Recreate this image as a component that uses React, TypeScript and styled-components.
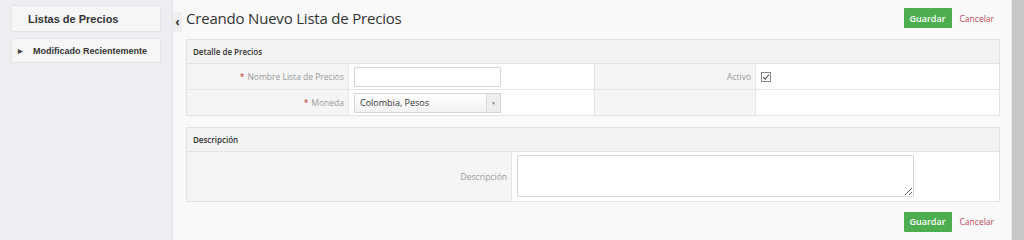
import React, { useState } from "react";
import styled, { createGlobalStyle } from "styled-components";

const GlobalStyle = createGlobalStyle`
  html, body {
    margin: 0;
    padding: 0;
    height: 240px;
    overflow: hidden;
    background: #f9f9f9;
  }
`;

const Page = styled.div`
  display: flex;
  width: 1024px;
  height: 240px;
  font-family: "Open Sans", "Liberation Sans", sans-serif;
`;

const Sidebar = styled.div`
  width: 173px;
  padding: 5px 11px 0 11px;
  box-sizing: border-box;
  background: #eceef1;
  display: flex;
  flex-direction: column;
  gap: 6px;
  border-right: 1px solid #e2e4e7;
`;

const SideCard = styled.div<{ $big?: boolean }>`
  width: 150px;
  height: ${(p) => (p.$big ? 27 : 25)}px;
  box-sizing: border-box;
  background: #f6f6f7;
  border: 1px solid #e3e4e6;
  border-radius: 2px;
  display: flex;
  align-items: center;
  padding-left: ${(p) => (p.$big ? 16 : 6)}px;
  font-family: "Liberation Sans", Arial, sans-serif;
  font-weight: bold;
  font-size: ${(p) => (p.$big ? 11 : 9)}px;
  color: #333;
  gap: 10px;
`;

const Caret = styled.span`
  font-size: 6px;
  color: #444;
`;

const Main = styled.div`
  flex: 1;
  display: flex;
  background: #f9f9f9;
`;

const Content = styled.div`
  flex: 1;
  display: flex;
  flex-direction: column;
  padding: 0 11px 0 0;
`;

const Collapse = styled.div`
  width: 9px;
  height: 20px;
  margin-top: 12px;
  background: #eeeff1;
  display: flex;
  align-items: center;
  justify-content: center;
  font-size: 12px;
  font-weight: bold;
  color: #333;
  line-height: 1;
`;

const TopBar = styled.div`
  display: flex;
  align-items: center;
  height: 40px;
  padding-left: 4px;
  padding-bottom: 3px;
`;

const Title = styled.h1`
  margin: 0;
  flex: 1;
  font-size: 15px;
  font-weight: normal;
  color: #333;
  letter-spacing: -0.2px;
`;

const Actions = styled.div`
  display: flex;
  align-items: center;
  gap: 8px;
  margin-right: 2px;
`;

const SaveButton = styled.button`
  width: 48px;
  height: 20px;
  border: none;
  border-radius: 1px;
  background: #4cae4f;
  color: #fff;
  font-family: "Open Sans", sans-serif;
  font-size: 9px;
  font-weight: 600;
  padding: 0;
`;

const CancelLink = styled.a`
  font-size: 8.5px;
  color: #b94a58;
  margin-right: 4px;
`;

const Panel = styled.div`
  margin-left: 4px;
  border: 1px solid #e3e3e3;
  background: #fff;
`;

const PanelHeader = styled.div`
  height: 23px;
  display: flex;
  align-items: center;
  padding-left: 6px;
  background: #f3f3f3;
  border-bottom: 1px solid #e3e3e3;
  font-size: 8px;
  font-weight: 600;
  color: #333;
`;

const Grid = styled.div<{ $cols: string }>`
  display: grid;
  grid-template-columns: ${(p) => p.$cols};
`;

const LabelCell = styled.div<{ $h: number; $last?: boolean }>`
  height: ${(p) => p.$h}px;
  box-sizing: border-box;
  background: #f5f5f6;
  border-right: 1px solid #e6e6e6;
  border-bottom: ${(p) => (p.$last ? "none" : "1px solid #e6e6e6")};
  display: flex;
  align-items: center;
  justify-content: flex-end;
  padding-right: 4px;
  font-size: 8.5px;
  color: #999;
`;

const FieldCell = styled.div<{ $h: number; $last?: boolean; $top?: boolean; $edge?: boolean }>`
  height: ${(p) => p.$h}px;
  box-sizing: border-box;
  background: #fff;
  border-right: ${(p) => (p.$edge ? "1px solid #e6e6e6" : "none")};
  border-bottom: ${(p) => (p.$last ? "none" : "1px solid #e6e6e6")};
  display: flex;
  align-items: ${(p) => (p.$top ? "flex-start" : "center")};
  padding: ${(p) => (p.$top ? "3px 5px" : "0 5px")};
`;

const Required = styled.span`
  color: #c0392b;
  margin-right: 3px;
`;

const TextInput = styled.input`
  width: 147px;
  height: 20px;
  box-sizing: border-box;
  border: 1px solid #d5d5d5;
  border-radius: 1px;
  padding: 0 4px;
  font-size: 9px;
  outline: none;
`;

const Select = styled.div`
  width: 147px;
  height: 20px;
  box-sizing: border-box;
  border: 1px solid #d5d5d5;
  display: flex;
  align-items: center;
  background: linear-gradient(#ffffff, #f2f2f2);
  font-size: 9px;
  color: #333;
`;

const SelectText = styled.span`
  flex: 1;
  padding-left: 5px;
`;

const SelectArrow = styled.span`
  width: 13px;
  height: 18px;
  border-left: 1px solid #ddd;
  background: #eeeeee;
  display: flex;
  align-items: center;
  justify-content: center;
  font-size: 5px;
  color: #888;
`;

const TextArea = styled.textarea`
  width: 397px;
  height: 42px;
  box-sizing: border-box;
  border: 1px solid #d5d5d5;
  border-radius: 1px;
  resize: both;
  outline: none;
`;

const Gap = styled.div`
  height: 12px;
`;

const BottomBar = styled.div`
  display: flex;
  justify-content: flex-end;
  align-items: center;
  height: 40px;
  padding-top: 2px;
`;

const Scrollbar = styled.div`
  width: 12px;
  background: #c8c8c8;
  border-left: 1px solid #e8e8e8;
`;

function CheckIcon() {
  return (
    <svg width="10" height="10" viewBox="0 0 10 10">
      <rect x="0.5" y="0.5" width="9" height="9" fill="#fff" stroke="#888" />
      <path d="M2.2 5.2 L4.2 7.2 L8 2.5" stroke="#555" strokeWidth="1.1" fill="none" />
    </svg>
  );
}

function App() {
  const [name, setName] = useState<string>("");
  const [description, setDescription] = useState<string>("");

  return (
    <>
      <GlobalStyle />
      <Page>
        <Sidebar>
          <SideCard $big>Listas de Precios</SideCard>
          <SideCard>
            <Caret>▶</Caret>
            Modificado Recientemente
          </SideCard>
        </Sidebar>
        <Main>
          <Collapse>‹</Collapse>
          <Content>
            <TopBar>
              <Title>Creando Nuevo Lista de Precios</Title>
              <Actions>
                <SaveButton>Guardar</SaveButton>
                <CancelLink>Cancelar</CancelLink>
              </Actions>
            </TopBar>

            <Panel>
              <PanelHeader>Detalle de Precios</PanelHeader>
              <Grid $cols="162px 246px 161px 1fr">
                <LabelCell $h={26}>
                  <Required>*</Required>Nombre Lista de Precios
                </LabelCell>
                <FieldCell $h={26} $edge>
                  <TextInput value={name} onChange={(e) => setName(e.target.value)} />
                </FieldCell>
                <LabelCell $h={26}>Activo</LabelCell>
                <FieldCell $h={26}>
                  <CheckIcon />
                </FieldCell>
                <LabelCell $h={25} $last>
                  <Required>*</Required>Moneda
                </LabelCell>
                <FieldCell $h={25} $last $edge>
                  <Select>
                    <SelectText>Colombia, Pesos</SelectText>
                    <SelectArrow>▼</SelectArrow>
                  </Select>
                </FieldCell>
                <LabelCell $h={25} $last />
                <FieldCell $h={25} $last />
              </Grid>
            </Panel>

            <Gap />

            <Panel>
              <PanelHeader>Descripción</PanelHeader>
              <Grid $cols="325px 1fr">
                <LabelCell $h={49} $last>Descripción</LabelCell>
                <FieldCell $h={49} $last $top>
                  <TextArea value={description} onChange={(e) => setDescription(e.target.value)} />
                </FieldCell>
              </Grid>
            </Panel>

            <BottomBar>
              <Actions>
                <SaveButton>Guardar</SaveButton>
                <CancelLink>Cancelar</CancelLink>
              </Actions>
            </BottomBar>
          </Content>
          <Scrollbar />
        </Main>
      </Page>
    </>
  );
}

export default App;
